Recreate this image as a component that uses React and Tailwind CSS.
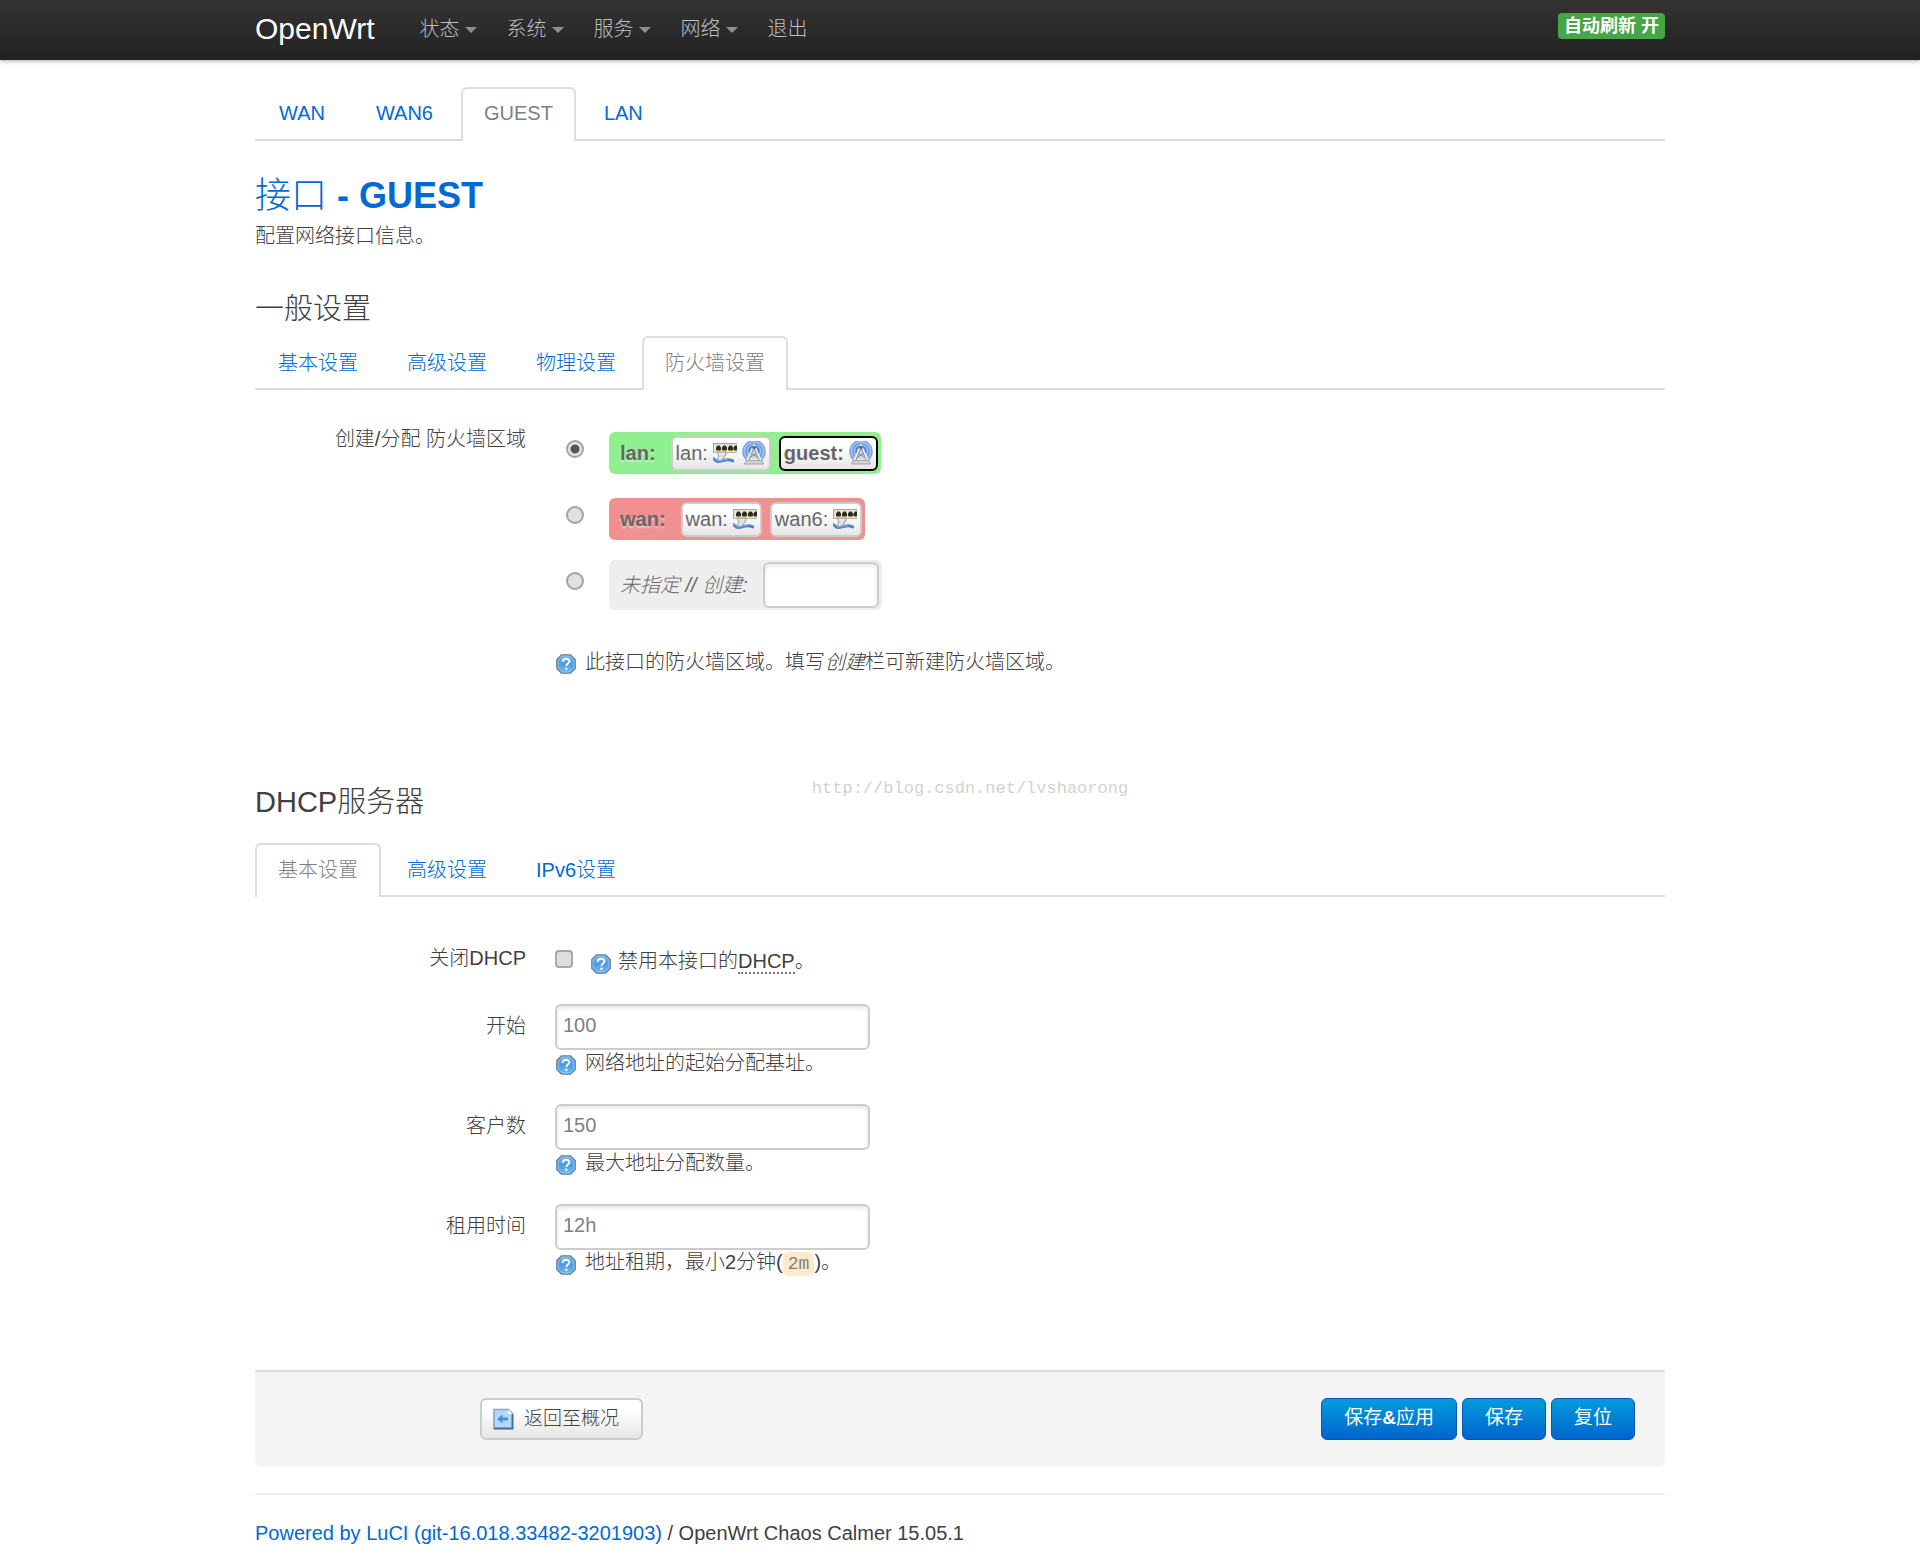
import React from "react";

const shell = "mx-auto w-full max-w-[1410px]";

function Tabs({ items, className }) {
  return (
    <ul className={"flex border-b-2 border-[#dddddd] text-[20px] " + className}>
      {items.map((t) => (
        <li key={t.label} className="mr-[3px] -mb-[2px]">
          <a
            href="#"
            className={
              t.active
                ? "block h-[54px] rounded-t-md border-2 border-b-0 border-[#dddddd] bg-white px-[21px] text-[#808080]"
                : "block h-[54px] border-2 border-b-0 border-transparent px-[21px] text-[#0069d6]"
            }
          >
            {t.label}
          </a>
        </li>
      ))}
    </ul>
  );
}

function HelpIcon({ className = "" }) {
  return (
    <svg viewBox="0 0 20 20" className={"inline-block h-5 w-5 shrink-0 " + className} aria-hidden="true">
      <defs>
        <linearGradient id="help" x1="0" y1="0" x2="0" y2="1">
          <stop offset="0" stopColor="#78b4ea" />
          <stop offset="0.5" stopColor="#4f9ae2" />
          <stop offset="1" stopColor="#6cc0f5" />
        </linearGradient>
      </defs>
      <path d="M5.500 .8h9l4.700 4.700v9l-4.700 4.700h-9L.8 14.500v-9z" fill="url(#help)" stroke="#6b7f94" strokeWidth="1.300" />
      <path d="M6 2.200h8l3.800 3.800v8L14 17.800H6L2.200 14V6z" fill="none" stroke="#8fc3f0" strokeWidth="1" />
      <path d="M6.800 7.800c0-4.200 6.600-3.900 6.600-.5 0 2.300-3 2.200-3 4.600" fill="none" stroke="#f4faff" strokeWidth="2" />
      <circle cx="10.300" cy="14.700" r="1.300" fill="#f4faff" />
    </svg>
  );
}

function EthernetIcon() {
  return (
    <svg viewBox="0 0 24 24" className="inline-block h-6 w-6" aria-hidden="true">
      <path d="M0 2h24v9.500H0z" fill="#e6e4d8" />
      <path d="M0 2.500h24M.5 2v9.500" stroke="#a3a39d" strokeWidth="1" />
      <path d="M0 11.500h24" stroke="#b9b9b2" strokeWidth="1" />
      {[5.5, 11.5, 17.5, 23].map((x) => (
        <g key={x}>
          <path d={`M${x - 2.5} 9V6.500L${x - 1} 4.500h2l1.500 2V9z`} fill="#2a2820" />
          <path d={`M${x - 2} 9.500h4`} stroke="#a08a3c" strokeWidth="1.200" />
        </g>
      ))}
      <path d="M4 11l2 4-2 4 5 1 3-6h1v-3z" fill="#e4e4e4" stroke="#9a9a9a" strokeWidth="1" />
      <path d="M0 17.500c2 0 2 3 5 3 4 0 6-1.800 10-1.800 2.500 0 4 1.300 6 1.300" fill="none" stroke="#4d82c6" strokeWidth="3" />
      <path d="M0 17c2.500 0 2.500 3 5 3 4 0 6-1.800 10-1.800" fill="none" stroke="#8db5e8" strokeWidth="1" />
    </svg>
  );
}

function WifiIcon() {
  return (
    <svg viewBox="0 0 24 24" className="inline-block h-6 w-6" aria-hidden="true">
      <circle cx="12" cy="10.500" r="10.500" fill="#a4c2ec" />
      <circle cx="12" cy="10.500" r="11" fill="none" stroke="#7ba5e0" strokeWidth="1.500" />
      <circle cx="12" cy="10.500" r="8" fill="none" stroke="#6a99dc" strokeWidth="1.400" />
      <circle cx="12" cy="10" r="5" fill="#6f9edf" stroke="#4b7fcb" strokeWidth="1.400" />
      <path d="M12 4.500L5.500 19h13z" fill="#c9d6ea" stroke="#f2f2f2" strokeWidth="2" />
      <path d="M12 6.500L7 19M12 6.500L17 19M9.800 12.500l5 3.500M14.200 12.500l-5.500 3.500" fill="none" stroke="#858a92" strokeWidth="1" />
      <circle cx="12" cy="6.500" r="1.800" fill="#3f66a4" />
      <path d="M4 19.500h16l1.500 3.500h-19z" fill="#d2d2d2" stroke="#969696" strokeWidth=".8" />
    </svg>
  );
}

function BackIcon() {
  return (
    <svg viewBox="0 0 22 22" className="h-[22px] w-[22px]" aria-hidden="true">
      <path d="M2 1.500h14.500l4 4v15H2z" fill="#b3d8ff" stroke="#8ba5c0" strokeWidth="1.600" />
      <path d="M20.500 6v14.500H2" fill="none" stroke="#4f6d94" strokeWidth="1.800" />
      <path d="M16 1.500v4.500h4.500z" fill="#fff" />
      <path d="M5 11l5.500-4.500v3H16v3h-5.500v3z" fill="#4f8fd8" />
    </svg>
  );
}

const menus = ["状态", "系统", "服务", "网络"];

function Net({ name, active, children }) {
  return (
    <span
      className={
        "flex h-[35px] items-center gap-[5px] rounded-md border-2 bg-linear-to-b from-white from-25% to-[#e6e6e6] px-[3px] text-[20px] leading-6 text-[#666666] " +
        (active ? "border-black font-bold" : "border-[#cccccc]")
      }
    >
      <span>{name}:</span>
      {children}
    </span>
  );
}

function Radio({ id, checked, label }) {
  return (
    <input
      id={id}
      type="radio"
      name="zone"
      aria-label={label}
      defaultChecked={checked}
      className="mr-[25px] mb-[8px] ml-[11px] h-[18px] w-[18px] shrink-0 appearance-none rounded-full border-2 border-[#a3a3a3] bg-[#e0e0e0] checked:bg-[radial-gradient(circle,#555555_0_4px,#e6e6e6_5px)]"
    />
  );
}

function Field({ id, label, value, children }) {
  return (
    <div className="mb-[27px] flex">
      <label htmlFor={id} className="w-[271px] shrink-0 pt-[9px] text-right text-[20px] leading-[27px]">
        {label}
      </label>
      <div className="ml-[29px]">
        <input
          id={id}
          defaultValue={value}
          className="block h-[46px] w-[315px] rounded-md border-2 border-[#cccccc] px-[6px] pb-[3px] text-[20px] text-[#808080] shadow-[inset_0_2px_4px_rgba(0,0,0,0.1)]"
        />
        <p className="flex h-[27px] items-center text-[20px] leading-[27px]">
          <HelpIcon className="mt-[2px] mr-[9px] ml-[1px]" />
          <span>{children}</span>
        </p>
      </div>
    </div>
  );
}

const blue =
  "h-[42px] rounded-md border border-[#0058b4] bg-linear-to-b from-[#049cdb] to-[#0064cd] px-[22px] pb-[2px] text-[19px] leading-6 text-white";

export default function App() {
  return (
    <div className="min-h-screen bg-white font-['Liberation_Sans','Noto_Sans_CJK_SC',sans-serif] text-[#404040]">
      <header className="h-[60px] bg-linear-to-b from-[#333333] to-[#222222] shadow-[0_1px_4px_rgba(0,0,0,0.35)]">
        <div className={shell + " flex h-[58px] items-center"}>
          <a href="#" className="mr-[45px] text-[30px] leading-[54px] text-white">OpenWrt</a>
          <nav className="flex text-[20px] font-light text-[#bfbfbf]">
            {menus.map((m) => (
              <a key={m} href="#" className="mr-[30px] flex items-center gap-[5px]">
                {m}
                <span className="mt-[2px] h-0 w-0 border-x-[6px] border-t-[6px] border-x-transparent border-t-[#8f8f8f]" />
              </a>
            ))}
            <a href="#">退出</a>
          </nav>
          <button className="mb-[6px] ml-auto h-[26px] rounded-[4px] bg-[#46a546] px-[6px] text-[18px] leading-[26px] font-bold text-white">
            自动刷新 开
          </button>
        </div>
      </header>

      <main className={shell + " pt-[27px]"}>
        <Tabs
          className="gap-[2px] pl-px leading-[48px]"
          items={[{ label: "WAN" }, { label: "WAN6" }, { label: "GUEST", active: true }, { label: "LAN" }]}
        />

        <h2 className="mt-[28px] text-[36px] leading-[54px] font-bold text-[#0069d6]">
          <span className="font-light">接口</span> - GUEST
        </h2>
        <p className="text-[20px] leading-[27px] font-light">配置网络接口信息。</p>

        <h3 className="mt-[32px] text-[29px] leading-[54px] font-light">一般设置</h3>
        <Tabs
          className="leading-[50px] font-light"
          items={[{ label: "基本设置" }, { label: "高级设置" }, { label: "物理设置" }, { label: "防火墙设置", active: true }]}
        />

        <section className="mt-[34px] flex text-[20px] leading-[27px] font-light">
          <div className="w-[271px] shrink-0 pt-[2px] text-right">创建/分配 防火墙区域</div>
          <div className="ml-[29px]">
            <div className="mt-[8px] flex h-[42px] items-center">
              <Radio id="zone-lan" label="lan" checked />
              <label htmlFor="zone-lan" className="flex h-[42px] items-center rounded-md bg-[#90f090] pr-[3px] pl-[11px]">
                <span className="mr-[15px] font-bold text-[#666666] [text-shadow:0_2px_2px_#ffffff80]">lan:</span>
                <span className="flex gap-[8px] font-normal">
                  <Net name="lan">
                    <EthernetIcon />
                    <WifiIcon />
                  </Net>
                  <Net name="guest" active>
                    <WifiIcon />
                  </Net>
                </span>
              </label>
            </div>
            <div className="mt-[24px] flex h-[42px] items-center">
              <Radio id="zone-wan" label="wan" />
              <label htmlFor="zone-wan" className="flex h-[42px] items-center rounded-md bg-[#f09090] pr-[3px] pl-[11px]">
                <span className="mr-[15px] font-bold text-[#666666] [text-shadow:0_2px_2px_#ffffff80]">wan:</span>
                <span className="flex gap-[8px] font-normal">
                  <Net name="wan">
                    <EthernetIcon />
                  </Net>
                  <Net name="wan6">
                    <EthernetIcon />
                  </Net>
                </span>
              </label>
            </div>
            <div className="mt-[20px] flex h-[50px] items-center">
              <Radio id="zone-new" label="未指定 // 创建" />
              <div className="flex h-[50px] items-center rounded-md bg-[#eeeeee] pr-[3px] pl-[11px]">
                <label htmlFor="zone-name" className="mr-[15px] text-[#666666] italic">未指定 // 创建:</label>
                <input
                  id="zone-name"
                  className="h-[46px] w-[116px] rounded-md border-2 border-[#cccccc] bg-white px-[6px] shadow-[inset_0_2px_4px_rgba(0,0,0,0.1)]"
                />
              </div>
            </div>
            <p className="mt-[39px] flex items-center">
              <HelpIcon className="mt-[3px] mr-[9px] ml-[1px]" />
              <span>
                此接口的防火墙区域。填写<em>创建</em>栏可新建防火墙区域。
              </span>
            </p>
          </div>
        </section>

        <div className="mt-[99px] flex h-[27px] justify-center pl-[20px] font-['Liberation_Mono',monospace] text-[17px] leading-[27px] text-[#d3d3cb]">
          http://blog.csdn.net/lvshaorong
        </div>
        <h3 className="-mt-[27px] text-[29px] leading-[54px] font-light">DHCP服务器</h3>
        <Tabs
          className="mt-[14px] leading-[50px] font-light"
          items={[{ label: "基本设置", active: true }, { label: "高级设置" }, { label: "IPv6设置" }]}
        />

        <section className="mt-[48px] font-light">
          <div className="mb-[27px] flex h-[32px] text-[20px] leading-[27px]">
            <label htmlFor="ignore" className="w-[271px] shrink-0 text-right">关闭DHCP</label>
            <input
              id="ignore"
              type="checkbox"
              className="mt-[5px] ml-[29px] h-[18px] w-[18px] appearance-none rounded-[4px] border-2 border-[#a8a8a8] bg-[#dedede]"
            />
            <p className="mt-[3px] ml-[18px] flex">
              <HelpIcon className="mt-[6px] mr-[7px]" />
              <span>
                禁用本接口的<abbr title="Dynamic Host Configuration Protocol" className="border-b-2 border-dotted border-[#777777] no-underline">DHCP</abbr>。
              </span>
            </p>
          </div>
          <Field id="start" label="开始" value="100">网络地址的起始分配基址。</Field>
          <Field id="limit" label="客户数" value="150">最大地址分配数量。</Field>
          <Field id="time" label="租用时间" value="12h">
            地址租期，最小2分钟(
            <code className="rounded-md bg-[#fee9cc] px-[5px] py-[2px] font-['Liberation_Mono',monospace] text-[18px] text-[#808080]">2m</code>
            )。
          </Field>
        </section>

        <div className="mt-[93px] flex h-[96px] items-start rounded-b-md border-t-2 border-[#dddddd] bg-[#f4f4f4] pt-[26px] pr-[30px] pl-[225px]">
          <button className="flex h-[42px] items-center gap-[10px] rounded-md border-2 border-[#cccccc] bg-linear-to-b from-white from-25% to-[#e6e6e6] pr-[22px] pl-[10px] text-[19px] leading-6 font-light text-[#444444]">
            <BackIcon />
            返回至概况
          </button>
          <div className="ml-auto flex gap-[5px]">
            <button className={blue}>保存<b>&amp;</b>应用</button>
            <button className={blue}>保存</button>
            <button className={blue}>复位</button>
          </div>
        </div>

        <footer className="mt-[27px] border-t-2 border-[#eeeeee] pt-[25px] text-[20px] leading-[27px]">
          <a href="#" className="text-[#0069d6]">Powered by LuCI (git-16.018.33482-3201903)</a> / OpenWrt Chaos Calmer 15.05.1
        </footer>
      </main>
    </div>
  );
}
